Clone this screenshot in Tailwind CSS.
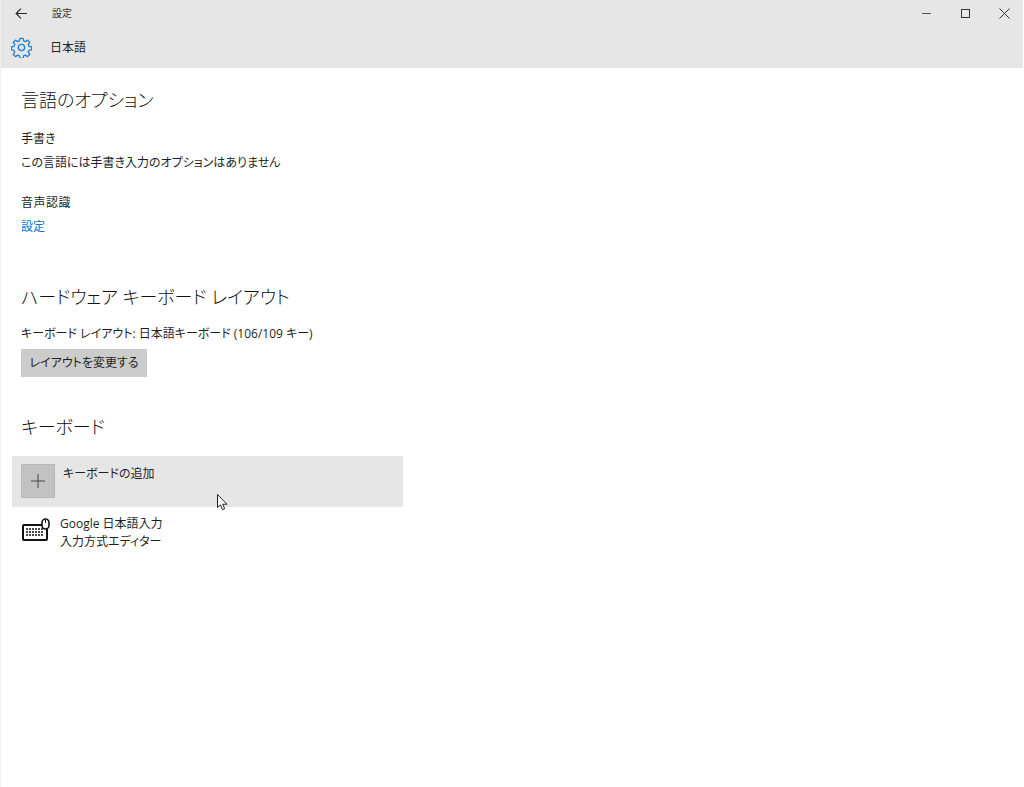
<!DOCTYPE html>
<html lang="ja">
<head>
<meta charset="UTF-8">
<title>設定</title>
<script src="https://cdn.jsdelivr.net/npm/@tailwindcss/browser@4"></script>
</head>
<body class="bg-white">
<div class="relative h-[787px] w-[1024px] overflow-hidden border-l border-[#eeeeee] bg-white font-['Open_Sans','Noto_Sans_CJK_JP',sans-serif] text-[#1f1f1f] [font-feature-settings:'palt']">
  <!-- header -->
  <header class="mr-px h-[68px] bg-[#e6e6e6] pt-px">
    <div class="flex h-[24px] items-center">
      <svg class="ml-[14px] h-[13px] w-[13px]" viewBox="0 0 13 13" fill="none" stroke="#222" stroke-width="1.1"><path d="M12 6.5H1.2M6 1.6L1.1 6.5 6 11.4"/></svg>
      <span class="ml-[24px] text-[10px] text-[#333]">設定</span>
      <div class="ml-auto mr-[13px] flex items-center">
        <div class="h-px w-[9px] bg-[#555]"></div>
        <div class="ml-[30px] h-[9px] w-[9px] border border-[#333]"></div>
        <svg class="ml-[29px] h-[11px] w-[11px]" viewBox="0 0 11 11" fill="none" stroke="#333"><path d="M.5.5l10 10M10.5.5l-10 10"/></svg>
      </div>
    </div>
    <div class="flex h-[45px] items-center">
      <svg class="ml-[10px] h-[21px] w-[21px]" viewBox="0 0 24 24" fill="none" stroke="#1b82d6" stroke-width="1.5" stroke-linejoin="round"><circle cx="12" cy="12" r="3.6"/><path d="M10.2 1.5h3.6l.6 3 1.9.8 2.6-1.7 2.5 2.5-1.7 2.6.8 1.9 3 .6v3.6l-3 .6-.8 1.9 1.7 2.6-2.5 2.5-2.6-1.7-1.9.8-.6 3h-3.6l-.6-3-1.9-.8-2.6 1.7-2.5-2.5 1.7-2.6-.8-1.9-3-.6v-3.6l3-.6.8-1.9-1.7-2.6 2.5-2.5 2.6 1.7 1.9-.8z"/></svg>
      <span class="ml-[18px] text-[12px]">日本語</span>
    </div>
  </header>

  <main class="pl-[20px]">
    <section class="pt-[19px]">
      <h2 class="text-[18px] leading-[26px] font-light text-[#111]">言語のオプション</h2>
      <p class="mt-[17px] text-[12px] leading-[18px]">手書き</p>
      <p class="mt-[6px] text-[12px] leading-[18px]">この言語には手書き入力のオプションはありません</p>
      <p class="mt-[22px] text-[12px] leading-[18px] tracking-[0.5px]">音声認識</p>
      <a class="mt-[6px] block text-[12px] leading-[18px] text-[#0078d7]">設定</a>
    </section>
    <section class="pt-[48px]">
      <h2 class="text-[18px] leading-[26px] font-light text-[#111]">ハードウェア キーボード レイアウト</h2>
      <p class="mt-[15px] text-[12px] leading-[18px]">キーボード レイアウト: 日本語キーボード (106/109 キー)</p>
      <button class="mt-[6px] block h-[28px] w-[126px] bg-[#cccccc] text-[12px]">レイアウトを変更する</button>
    </section>
    <section class="pt-[37px]">
      <h2 class="text-[18px] leading-[26px] font-light text-[#111]">キーボード</h2>
      <div class="-ml-[9px] mt-[16px] flex h-[51px] w-[391px] bg-[#e6e6e6] pl-[9px] pt-[8px]">
        <div class="flex h-[34px] w-[34px] items-center justify-center border border-[#b8b8b8] bg-[#c2c2c2]">
          <svg class="h-[14px] w-[14px]" viewBox="0 0 14 14" stroke="#444" stroke-width="1"><path d="M7 0v14M0 7h14"/></svg>
        </div>
        <span class="ml-[8px] mt-[1px] text-[12px] leading-[18px]">キーボードの追加</span>
      </div>
      <div class="mt-[8px] flex">
        <svg class="ml-px mt-[3px] h-[24px] w-[29px]" viewBox="0 0 29 24" fill="none">
          <rect x="1" y="7" width="24" height="15" rx="1" stroke="#111" stroke-width="2"/>
          <path d="M4 11h18M4 14h18M4 17h18" stroke="#111" stroke-width="1.6" stroke-dasharray="2 1"/>
          <rect x="20" y="1" width="7" height="10" rx="3.5" fill="#fff" stroke="#111" stroke-width="1.6"/>
          <path d="M23.5 2v3" stroke="#111"/>
        </svg>
        <div class="ml-[9px] text-[12px] leading-[18px]">
          <p>Google 日本語入力</p>
          <p>入力方式エディター</p>
        </div>
      </div>
    </section>
  </main>

  <!-- mouse pointer -->
  <svg class="absolute left-[216px] top-[494px] h-[17px] w-[12px]" viewBox="0 0 12 17" fill="#fff" stroke="#222" stroke-width="1"><path d="M.5.5v13l3-2.6 2 4.8 2.2-1-2-4.5h4.3z"/></svg>
</div>
</body>
</html>
